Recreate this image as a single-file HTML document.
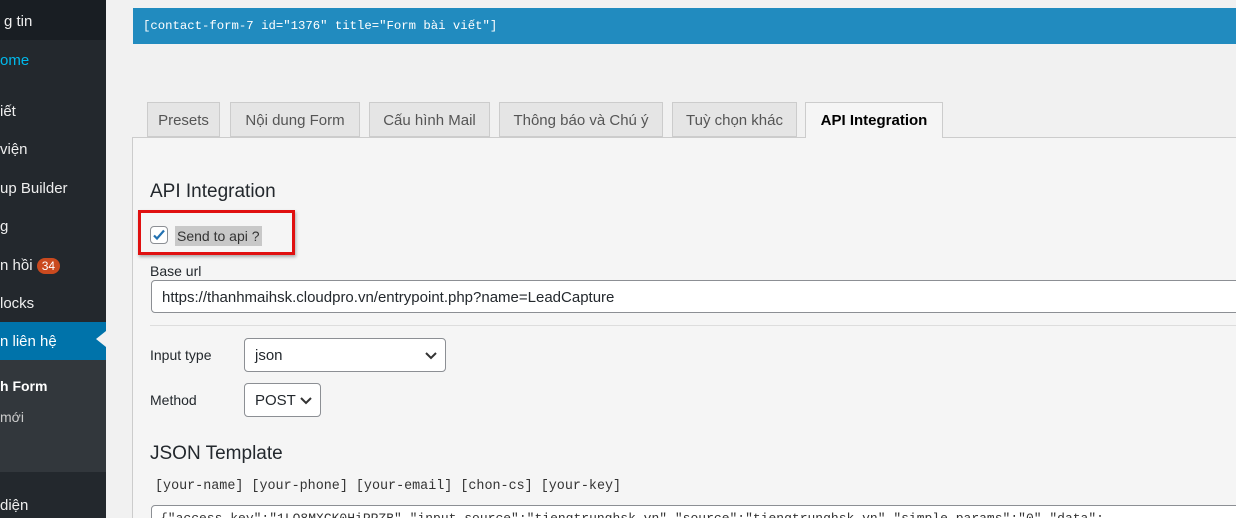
<!DOCTYPE html>
<html style="width:1236px;height:518px;overflow:hidden"><head><meta charset="utf-8"><style>
*{box-sizing:border-box;margin:0;padding:0}
body{width:1236px;height:518px;overflow:hidden;background:#f1f1f1;font-family:"Liberation Sans","Noto Sans CJK SC",sans-serif;font-size:14px;color:#23282d;position:relative}
#sb{position:absolute;left:0;top:0;width:106px;height:518px;background:#23282d;color:#eee}
#sb div{position:absolute;left:0;font-size:15px;white-space:nowrap}
.tab{position:absolute;top:102px;height:35px;border:1px solid #ccc;background:#e5e5e5;font-size:15px;line-height:36px;text-align:center;color:#555}
.mono{font-family:"Liberation Mono",monospace}
</style></head><body>
<div id="sb">
<div style="top:0;width:106px;height:40px;background:#191e23"></div>
<div style="top:13px;left:4px">g tin</div>
<div style="top:52px;color:#00b9eb">ome</div>
<div style="top:103px">iết</div>
<div style="top:141px">viện</div>
<div style="top:180px">up Builder</div>
<div style="top:218px">g</div>
<div style="top:257px">n hồi <span style="display:inline-block;background:#ca4a1f;color:#fff;border-radius:9px;font-size:12px;padding:1px 5px">34</span></div>
<div style="top:295px">locks</div>
<div style="top:322px;width:106px;height:38px;background:#0073aa"></div>
<div style="top:333px;color:#fff">n liên hệ</div>
<div style="top:331px;left:96px;width:0;height:0;border-top:8px solid transparent;border-bottom:8px solid transparent;border-right:10px solid #f1f1f1"></div>
<div style="top:360px;width:106px;height:112px;background:#32373c"></div>
<div style="top:378px;font-weight:bold;font-size:14px;color:#fff">h Form</div>
<div style="top:409px;font-size:14px;color:#ccc">mới</div>
<div style="top:497px">diện</div>
</div>
<div style="position:absolute;left:133px;top:8px;width:1103px;height:36px;background:#218bbf;color:#fff" class="mono"><span style="position:absolute;left:10px;top:11px;font-size:12.3px">[contact-form-7 id="1376" title="Form bài viết"]</span></div>
<div class="tab" style="left:147px;width:73px">Presets</div>
<div class="tab" style="left:230px;width:130px">Nội dung Form</div>
<div class="tab" style="left:369px;width:121px">Cấu hình Mail</div>
<div class="tab" style="left:499px;width:164px">Thông báo và Chú ý</div>
<div class="tab" style="left:672px;width:125px">Tuỳ chọn khác</div>
<div style="position:absolute;left:132px;top:137px;width:1110px;height:400px;border:1px solid #ccc;background:#f5f5f5"></div>
<div class="tab" style="left:805px;width:138px;height:36px;background:#f5f5f5;color:#000;font-weight:bold;border-bottom:none">API Integration</div>
<div style="position:absolute;left:150px;top:181px;font-size:19px;color:#23282d">API Integration</div>
<div style="position:absolute;left:138px;top:210px;width:157px;height:45px;border:3px solid #e01010;box-shadow:1px 2px 3px rgba(0,0,0,.3)"></div>
<div style="position:absolute;left:150px;top:226px;width:18px;height:18px;border:1px solid #8c8f94;border-radius:4px;background:#fff"><svg width="16" height="16" viewBox="0 0 16 16"><path d="M3 8.5l3 3 7-8" stroke="#2271b1" stroke-width="2.2" fill="none"/></svg></div>
<div style="position:absolute;left:175px;top:226px;height:20px;background:#c8c8c8;font-size:14px;line-height:20px;color:#333;padding:0 2px">Send to api ?</div>
<div style="position:absolute;left:150px;top:263px;font-size:14px">Base url</div>
<div style="position:absolute;left:151px;top:280px;width:1100px;height:33px;background:#fff;border:1px solid #8c8f94;border-radius:4px;font-size:15px;line-height:33px;padding-left:10px">https://thanhmaihsk.cloudpro.vn/entrypoint.php?name=LeadCapture</div>
<div style="position:absolute;left:150px;top:325px;width:1100px;border-top:1px solid #ddd"></div>
<div style="position:absolute;left:150px;top:347px;font-size:14px">Input type</div>
<div style="position:absolute;left:244px;top:338px;width:202px;height:34px;background:#fff;border:1px solid #8c8f94;border-radius:4px;font-size:15px;line-height:34px;padding-left:10px">json<svg style="position:absolute;right:8px;top:13px" width="12" height="8" viewBox="0 0 12 8"><path d="M1 1l5 5 5-5" stroke="#333" stroke-width="2" fill="none"/></svg></div>
<div style="position:absolute;left:150px;top:392px;font-size:14px">Method</div>
<div style="position:absolute;left:244px;top:383px;width:77px;height:34px;background:#fff;border:1px solid #8c8f94;border-radius:4px;font-size:15px;line-height:34px;padding-left:10px">POST<svg style="position:absolute;right:8px;top:13px" width="12" height="8" viewBox="0 0 12 8"><path d="M1 1l5 5 5-5" stroke="#333" stroke-width="2" fill="none"/></svg></div>
<div style="position:absolute;left:150px;top:443px;font-size:19px">JSON Template</div>
<div class="mono" style="position:absolute;left:155px;top:479px;font-size:13.4px;color:#333">[your-name] [your-phone] [your-email] [chon-cs] [your-key]</div>
<div class="mono" style="position:absolute;left:151px;top:505px;width:1100px;height:30px;background:#fff;border:1px solid #8c8f94;border-radius:4px;font-size:13px;padding:5px 8px;color:#333;white-space:nowrap;overflow:hidden">{"access_key":"1LO8MXCK0HiPPZB","input_source":"tiengtrunghsk.vn","source":"tiengtrunghsk.vn","simple_params":"0","data":</div>
</body></html>
